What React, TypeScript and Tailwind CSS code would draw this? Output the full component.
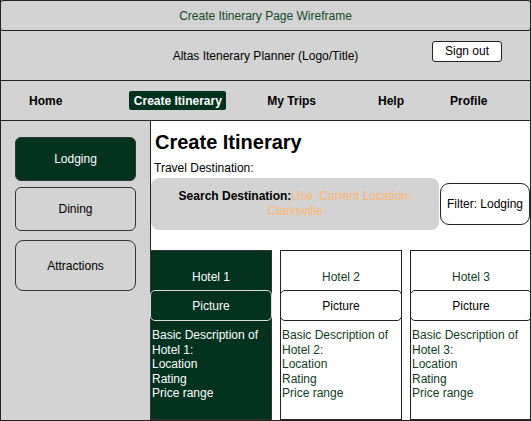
import React from "react";

const GREEN = "bg-[#03321f]";

function HotelCard({ n, active }: { n: number; active?: boolean }) {
  return (
    <div
      className={`flex w-[122px] shrink-0 flex-col border ${
        active ? "border-[#333] bg-[#03321f] text-white" : "border-[#222] bg-white text-[#0f4024]"
      }`}
    >
      <div className="flex h-[39px] items-end justify-center pb-[4px] text-[12px]">Hotel {n}</div>
      <div
        className={`-mx-px flex h-[31px] items-center justify-center rounded-[5px] border text-[12px] ${
          active ? "border-[#ddd] bg-[#03321f] text-white" : "border-[#222] bg-white text-black"
        }`}
      >
        Picture
      </div>
      <div className="pl-[1px] pt-[7px] text-[12px] leading-[14.5px]">
        Basic Description of
        <br />
        Hotel {n}:
        <br />
        Location
        <br />
        Rating
        <br />
        Price range
      </div>
    </div>
  );
}

export default function App() {
  return (
    <div
      className="flex h-[421px] w-[531px] flex-col overflow-hidden border-b border-l border-r border-[#222] bg-[#d3d3d3] text-black"
      style={{ fontFamily: '"Liberation Sans", Arial, sans-serif' }}
    >
      <div className="-mx-px flex h-[31px] shrink-0 items-center justify-center rounded-[3px] border border-[#222] text-[12px] text-[#124a2a]">
        Create Itinerary Page Wireframe
      </div>
      <div className="grid h-[50px] shrink-0 grid-cols-[1fr_auto_1fr] items-center border-b border-[#222]">
        <div />
        <div className="pt-[1px] text-[12px]">Altas Itenerary Planner (Logo/Title)</div>
        <div className="flex justify-end pr-[28px] pb-[9px]">
          <div className="flex h-[21px] w-[70px] items-center justify-center rounded-[3px] border border-[#222] bg-white text-[12px]">
            Sign out
          </div>
        </div>
      </div>
      <div className="flex h-[40px] shrink-0 items-center border-b border-[#222] text-[12px] font-bold">
        <div className="ml-[28px]">Home</div>
        <div className="ml-[67px] flex h-[19px] w-[97px] items-center justify-center rounded-[2px] bg-[#03321f] text-white">
          Create Itinerary
        </div>
        <div className="ml-[41px]">My Trips</div>
        <div className="ml-[62px]">Help</div>
        <div className="ml-[46px]">Profile</div>
      </div>
      <div className="flex min-h-0 flex-1">
        <div className="flex w-[150px] shrink-0 flex-col border-r border-[#222] pl-[14px] pt-[16px] text-[12px]">
          <div className={`flex h-[44px] w-[121px] items-center justify-center rounded-[6px] border border-[#333] ${GREEN} text-white`}>
            Lodging
          </div>
          <div className="mt-[6px] flex h-[44px] w-[121px] items-center justify-center rounded-[6px] border border-[#333]">
            Dining
          </div>
          <div className="mt-[9px] flex h-[51px] w-[121px] items-center justify-center rounded-[8px] border border-[#333]">
            Attractions
          </div>
        </div>
        <div className="flex min-w-0 flex-1 flex-col bg-white">
          <div className="pl-[4px] pt-[9px] text-[20px] font-bold leading-[24px]">Create Itinerary</div>
          <div className="pl-[3px] pt-[7px] text-[12px] leading-[14px]">Travel Destination:</div>
          <div className="mt-[3px] flex items-center">
            <div className="flex h-[52px] w-[288px] items-center justify-center rounded-[8px] bg-[#d3d3d3] px-[26px] text-center text-[12px] leading-[15px]">
              <div>
                <span className="font-bold">Search Destination:</span>
                <span className="text-[#ffb570]">Use&nbsp; Current Location: Clarksville</span>
              </div>
            </div>
            <div className="ml-px flex h-[42px] flex-1 items-center justify-center rounded-[9px] border border-[#222] text-[12px]">
              Filter: Lodging
            </div>
          </div>
          <div className="-ml-px mt-[20px] flex min-h-0 flex-1 gap-[8px]">
            <HotelCard n={1} active />
            <HotelCard n={2} />
            <HotelCard n={3} />
          </div>
        </div>
      </div>
    </div>
  );
}
